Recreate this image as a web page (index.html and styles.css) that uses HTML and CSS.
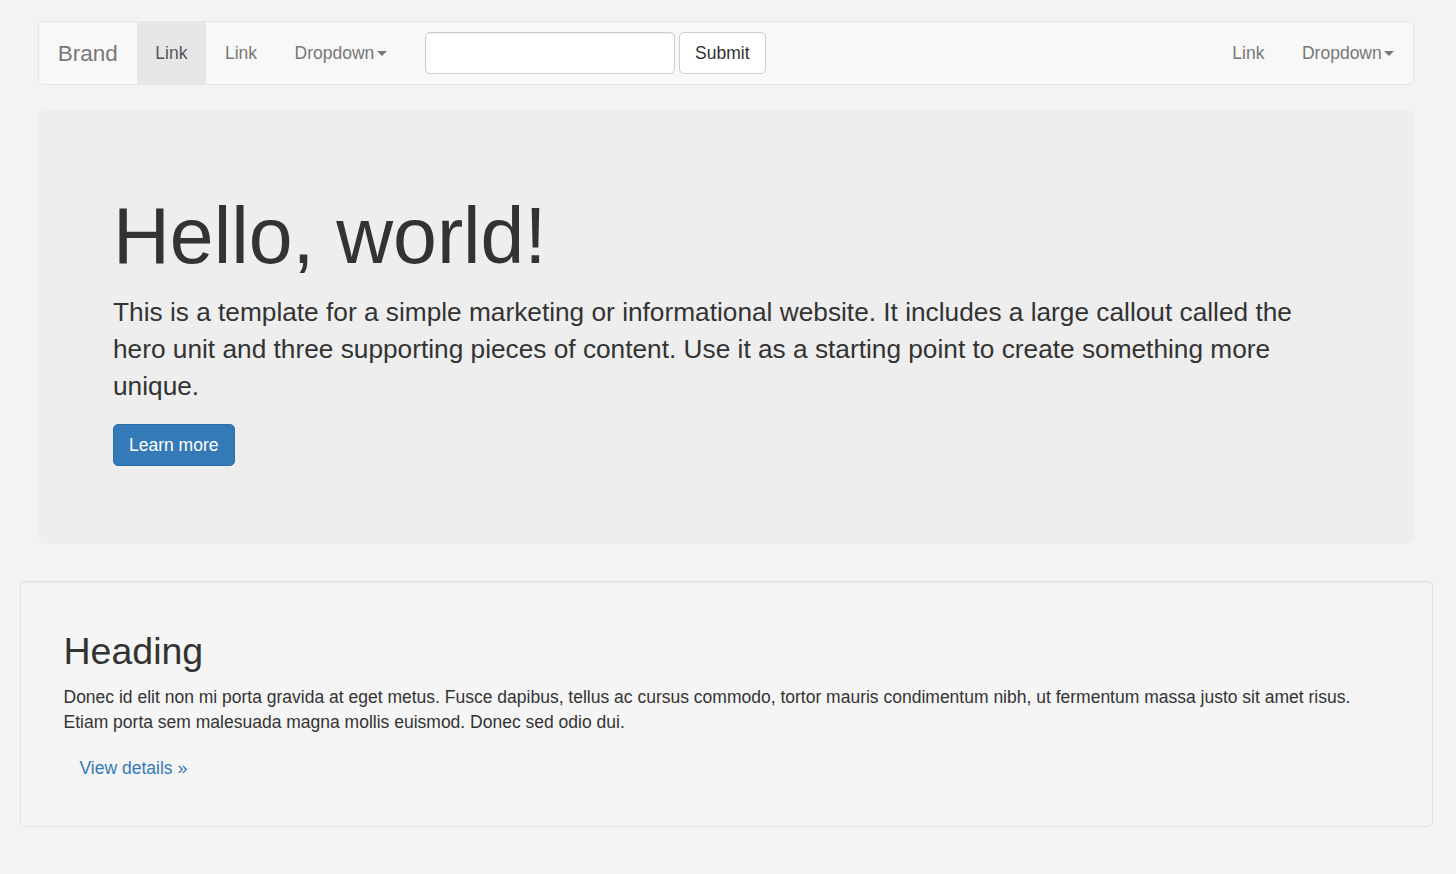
FILE: index.html
```html
<!DOCTYPE html>
<html lang="en">
<head>
<meta charset="utf-8">
<title>Jumbotron</title>
<link rel="stylesheet" href="styles.css">
</head>
<body>
<div class="top">
  <nav class="navbar">
    <a class="brand" href="#">Brand</a>
    <ul class="nav">
      <li class="active"><a href="#">Link</a></li>
      <li><a href="#">Link</a></li>
      <li><a href="#">Dropdown<span class="caret"></span></a></li>
    </ul>
    <form class="navbar-form">
      <input class="form-control" type="text"><button class="btn btn-default" type="button">Submit</button>
    </form>
    <ul class="nav nav-right">
      <li><a href="#">Link</a></li>
      <li><a href="#">Dropdown<span class="caret"></span></a></li>
    </ul>
  </nav>
  <div class="jumbotron">
    <h1>Hello, world!</h1>
    <p class="lead">This is a template for a simple marketing or informational website. It includes a large callout called the hero unit and three supporting pieces of content. Use it as a starting point to create something more unique.</p>
    <p class="lead"><a class="btn btn-primary" href="#">Learn more</a></p>
  </div>
</div>
<div class="bottom">
  <div class="well">
    <div class="col">
      <h2>Heading</h2>
      <p>Donec id elit non mi porta gravida at eget metus. Fusce dapibus, tellus ac cursus commodo, tortor mauris condimentum nibh, ut fermentum massa justo sit amet risus. Etiam porta sem malesuada magna mollis euismod. Donec sed odio dui.</p>
      <p><a class="btn btn-link" href="#">View details &raquo;</a></p>
    </div>
  </div>
</div>
</body>
</html>
```
FILE: styles.css
```css
* { box-sizing: border-box; }
html, body { margin: 0; padding: 0; }
body {
  background: #f3f3f3;
  font-family: "Liberation Sans", Arial, Helvetica, sans-serif;
  font-size: 17.5px;
  line-height: 25px;
  color: #333;
}
a { text-decoration: none; }

.top { padding: 21px 42px 0 38px; }

.navbar {
  display: flex;
  align-items: flex-start;
  background: #f8f8f8;
  border: 1px solid #e7e7e7;
  border-radius: 5px;
  height: 64px;
  margin-bottom: 25px;
}
.brand {
  display: block;
  padding: 18.75px;
  font-size: 22.5px;
  line-height: 25px;
  height: 62px;
  color: #777;
}
.nav { list-style: none; margin: 0; padding: 0; display: flex; }
.nav li a {
  display: block;
  padding: 18.5px 18.75px;
  line-height: 25px;
  color: #777;
}
.nav li.active a { background: #e7e7e7; color: #555; }
.nav-right { margin-left: auto; }
.caret {
  display: inline-block;
  width: 0; height: 0;
  margin-left: 2.5px;
  vertical-align: middle;
  border-top: 5px solid #777;
  border-left: 5px solid transparent;
  border-right: 5px solid transparent;
}
.navbar-form { margin: 10px 0 0 19px; display: flex; align-items: center; gap: 4.5px; }
.form-control {
  width: 250px;
  height: 42px;
  padding: 7.5px 15px;
  font: inherit;
  border: 1px solid #ccc;
  border-radius: 5px;
  background: #fff;
  box-shadow: inset 0 1px 1px rgba(0,0,0,.075);
}
.btn {
  display: inline-block;
  padding: 7.5px 15px;
  font: inherit;
  font-size: 17.5px;
  line-height: 25px;
  border: 1px solid transparent;
  border-radius: 5px;
}
.btn-default { background: #fff; border-color: #ccc; color: #333; height: 42px; }
.btn-primary { background: #337ab7; border-color: #2e6da4; color: #fff; }
.btn-link { color: #337ab7; }

.jumbotron {
  background: #eee;
  border-radius: 7.5px;
  padding: 60px 75px 58px;
}
.jumbotron h1 {
  margin: 23px 0 14.5px;
  font-size: 78.75px;
  line-height: 1.1;
  font-weight: 500;
  color: #333;
}
.jumbotron .lead {
  margin: 0 0 19.75px;
  font-size: 26.25px;
  line-height: 1.4;
}
.jumbotron .lead .btn { font-size: 17.5px; line-height: 25px; vertical-align: top; }

.bottom { padding: 37.5px 23px 0 20px; }
.well {
  background: #f5f5f5;
  border: 1px solid #e3e3e3;
  border-radius: 5px;
  box-shadow: inset 0 1px 1px rgba(0,0,0,.05);
  padding: 23.75px;
}
.col { padding: 0 18.75px; }
.col h2 {
  margin: 25px 0 12.5px;
  font-size: 37.5px;
  line-height: 1.1;
  font-weight: 500;
}
.col p { margin: 0 0 12.5px; }
```
